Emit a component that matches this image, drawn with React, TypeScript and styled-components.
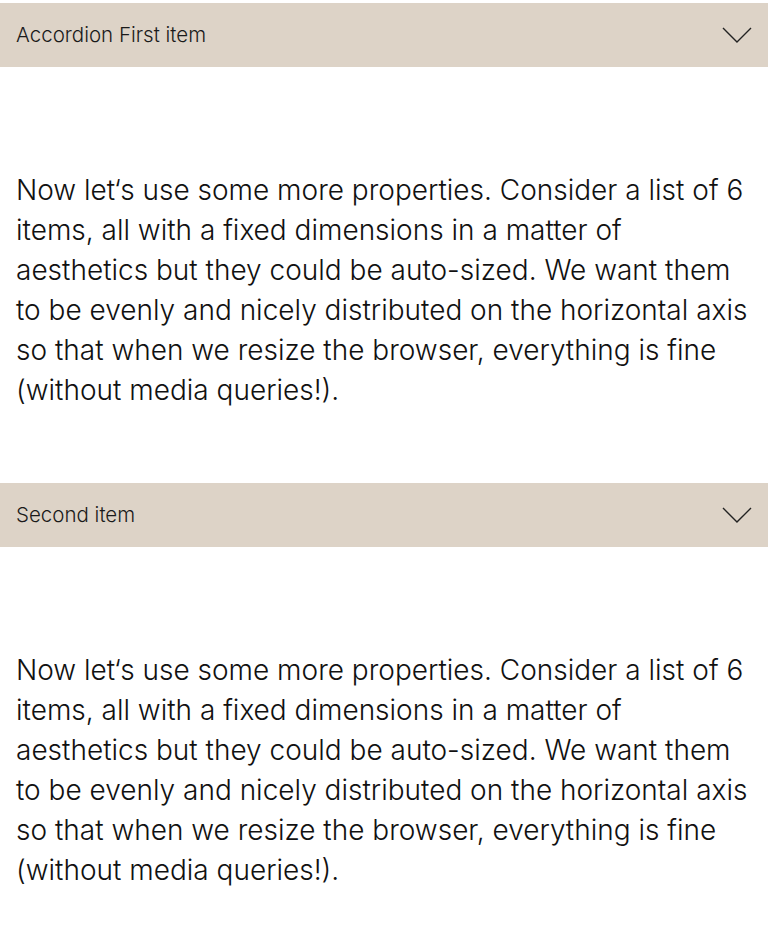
import React from "react";
import styled, { createGlobalStyle } from "styled-components";

const Global = createGlobalStyle`
  html, body { margin: 0; padding: 0; background: #fff; }
  body { font-family: Inter, "Noto Sans", sans-serif; color: #111; }
`;

const Page = styled.div`
  padding-top: 3px;
  display: flex;
  flex-direction: column;
`;

const Item = styled.section`
  display: flex;
  flex-direction: column;
`;

const Header = styled.button`
  all: unset;
  box-sizing: border-box;
  height: 64px;
  background: #ddd3c7;
  display: flex;
  align-items: center;
  justify-content: space-between;
  padding: 0 16px;
  font-family: Inter, "Noto Sans", sans-serif;
  font-size: 20.5px;
  font-weight: 300;
  color: #1a1a1a;
  cursor: pointer;
`;

const Label = styled.span`
  margin-top: -1px;
`;

const Panel = styled.div`
  padding: 103px 16px 73px;
`;

const Text = styled.p`
  margin: 0;
  font-size: 28px;
  font-weight: 300;
  line-height: 40px;
  color: #111;
`;

const Chevron = () => (
  <svg width="30" height="16" viewBox="0 0 30 16" fill="none">
    <path d="M1 1 L15 15 L29 1" stroke="#222" strokeWidth="1.4" />
  </svg>
);

const copy =
  "Now let\u2018s use some more properties. Consider a list of 6 items, all with a fixed dimensions in a matter of aesthetics but they could be auto-sized. We want them to be evenly and nicely distributed on the horizontal axis so that when we resize the browser, everything is fine (without media queries!).";

const items = ["Accordion First item", "Second item"];

export default function App() {
  return (
    <>
      <Global />
      <Page>
        {items.map((t) => (
          <Item key={t}>
            <Header>
              <Label>{t}</Label>
              <Chevron />
            </Header>
            <Panel>
              <Text>{copy}</Text>
            </Panel>
          </Item>
        ))}
      </Page>
    </>
  );
}
